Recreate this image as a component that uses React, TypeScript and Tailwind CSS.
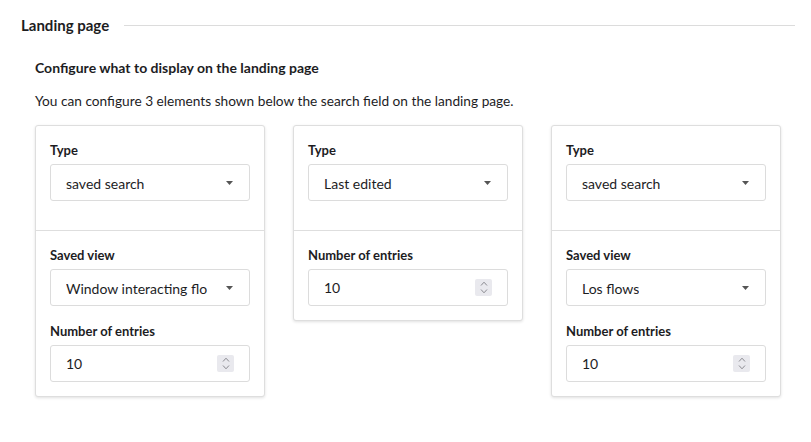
import React from 'react';

const Caret: React.FC = () => (
    <svg width="7" height="4" viewBox="0 0 7 4" className="shrink-0 mr-[1px] mt-[1px]">
        <path d="M0 0 L7 0 L3.5 4 Z" fill="#555" />
    </svg>
);

const Spinner: React.FC = () => (
    <div className="w-[17px] h-[17px] rounded-[2px] bg-[#e9e9ee] flex flex-col items-center justify-center gap-[3px]">
        <svg width="8" height="5" viewBox="0 0 8 5">
            <path d="M1 4.5 L4 1.2 L7 4.5" fill="none" stroke="#8a8a90" strokeWidth="1" />
        </svg>
        <svg width="8" height="5" viewBox="0 0 8 5">
            <path d="M1 0.5 L4 3.8 L7 0.5" fill="none" stroke="#8a8a90" strokeWidth="1" />
        </svg>
    </div>
);

const Label: React.FC<{ children: React.ReactNode }> = ({ children }) => (
    <div className="text-[13px] leading-[18px] font-bold text-[#1d1d1f] mb-[5px]">{children}</div>
);

const SelectBox: React.FC<{ value: string }> = ({ value }) => (
    <div className="h-[37px] border border-[#dcdcdc] rounded-[3px] bg-white flex items-center justify-between pl-[15px] pr-[15px]">
        <span className="text-[14px] text-[#1d1d1f] whitespace-nowrap overflow-hidden mt-[1px]">{value}</span>
        <Caret />
    </div>
);

const NumberBox: React.FC<{ value: string }> = ({ value }) => (
    <div className="h-[37px] border border-[#dcdcdc] rounded-[3px] bg-white flex items-center justify-between pl-[15px] pr-[15px]">
        <span className="text-[14px] text-[#1d1d1f]">{value}</span>
        <Spinner />
    </div>
);

interface CardProps {
    type: string;
    savedView?: string;
}

const ElementCard: React.FC<CardProps> = ({ type, savedView }) => (
    <div className="w-[230px] bg-white border border-[#dedede] rounded-[3px] shadow-[0_1px_3px_rgba(0,0,0,0.12)]">
        <div className="pt-[15px] px-[14px] pb-[29px]">
            <Label>Type</Label>
            <SelectBox value={type} />
        </div>
        <div className="border-t border-[#dedede] pt-[15px] px-[14px] pb-[14px]">
            {savedView && (
                <div className="mb-[16px]">
                    <Label>Saved view</Label>
                    <SelectBox value={savedView} />
                </div>
            )}
            <Label>Number of entries</Label>
            <NumberBox value="10" />
        </div>
    </div>
);

export default function App() {
    return (
        <div className="min-h-screen bg-white text-[#1d1d1f] pt-[14px] pl-[21px] pr-[16px]" style={{ fontFamily: 'Lato, "Noto Sans", sans-serif' }}>
            {/* Section header */}
            <div className="flex items-center h-[22px]">
                <h2 className="text-[15px] font-bold leading-[22px] whitespace-nowrap">Landing page</h2>
                <div className="flex-1 h-px bg-[#dcdcdc] ml-[15px]" />
            </div>

            <div className="pl-[14px]">
                <h3 className="mt-[22px] text-[14px] leading-[20px] font-bold">Configure what to display on the landing page</h3>
                <p className="mt-[13px] text-[13.7px] leading-[20px]">
                    You can configure 3 elements shown below the search field on the landing page.
                </p>

                <div className="mt-[14px] flex items-start gap-[28px]">
                    <ElementCard type="saved search" savedView="Window interacting flo" />
                    <ElementCard type="Last edited" />
                    <ElementCard type="saved search" savedView="Los flows" />
                </div>
            </div>
        </div>
    );
}
